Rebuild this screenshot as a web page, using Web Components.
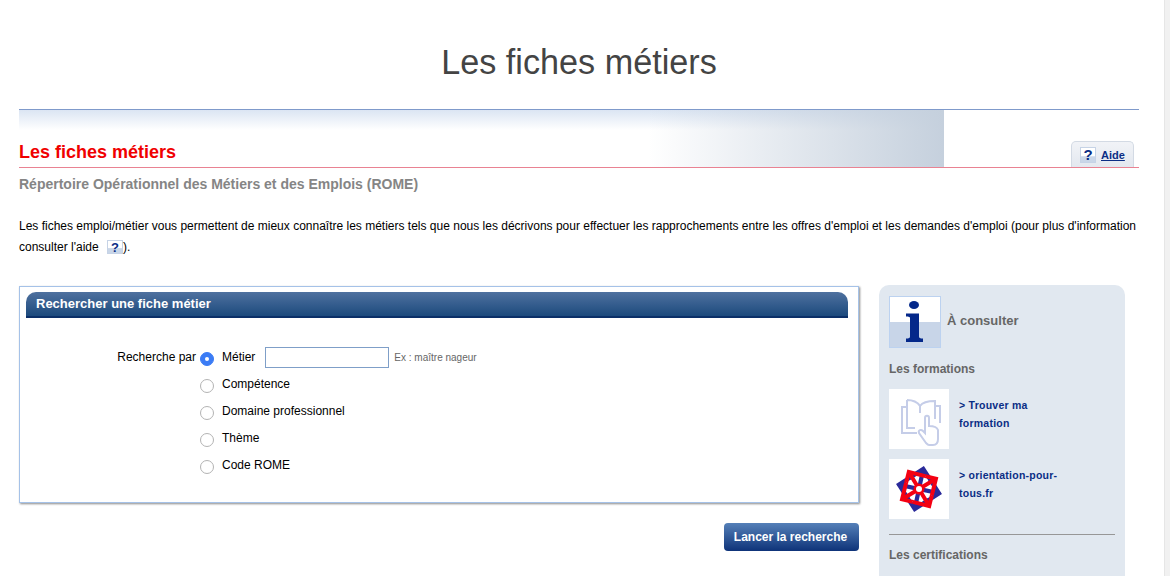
<!DOCTYPE html>
<html lang="fr"><head><meta charset="utf-8"><title>Les fiches métiers</title>
<style>
html,body{margin:0;padding:0;height:576px;overflow:hidden;background:#fff;font-family:"Liberation Sans",Arial,sans-serif;color:#000}
</style></head><body>
<fiche-page>
  <site-title>Les fiches métiers</site-title>
  <page-banner>Les fiches métiers</page-banner>
  <rome-subtitle>Répertoire Opérationnel des Métiers et des Emplois (ROME)</rome-subtitle>
  <intro-text></intro-text>
  <search-layout>
    <div>
      <search-panel></search-panel>
      <search-button></search-button>
    </div>
    <side-panel slot="side"></side-panel>
  </search-layout>
</fiche-page>
<script>
function def(name, html){
  customElements.define(name, class extends HTMLElement{
    constructor(){super();const r=this.attachShadow({mode:"open"});r.innerHTML=html;}
  });
}
const qmark=(w,h,fs,base)=>`<svg width="${w}" height="${h}" viewBox="0 0 ${w} ${h}" style="display:block"><rect width="${w}" height="${h}" fill="#fff"/><rect y="${h*0.58}" width="${w}" height="${h*0.42}" fill="#c9d6e8"/><rect x=".5" y=".5" width="${w-1}" height="${h-1}" fill="none" stroke="#c6d3e6"/><text x="${w/2}" y="${base}" text-anchor="middle" font-family="Liberation Sans" font-weight="700" font-size="${fs}" fill="#0a2d85">?</text></svg>`;
const four=(s)=>[0,90,180,270].map(a=>`<g transform="rotate(${a})">${s}</g>`).join("");

def("fiche-page",`<style>
:host{display:flex;height:576px;overflow:hidden}
.main{flex:1;min-width:0;padding:0 25px 0 19px;box-sizing:border-box}
.bar{width:6px;background:#f1f1f1;border-left:1px solid #e6e6e6;box-sizing:border-box}
</style><div class="main"><slot></slot></div><div class="bar"></div>`);

def("site-title",`<style>
:host{display:block;height:109px;box-sizing:border-box;padding-top:44px;text-align:center;font-size:34.2px;line-height:37px;color:#444}
</style><slot></slot>`);

def("help-tab",`<style>
:host{display:flex;align-items:flex-start;gap:5px;width:63px;height:26px;box-sizing:border-box;padding:5px 0 0 8px;background:linear-gradient(#f1f3f7,#e3e8ef);border:1px solid #d3dae4;border-bottom:0;border-radius:5px 5px 0 0}
a{font-size:11px;font-weight:700;color:#0a2d85;text-decoration:underline;line-height:13px;margin-top:2px}
</style>${qmark(16,16,15,13)}<a href="#">Aide</a>`);

def("page-banner",`<style>
:host{display:flex;justify-content:space-between;align-items:flex-end;height:59px;box-sizing:border-box;border-top:1px solid #7f9acb;border-bottom:1px solid #e98292;
background:linear-gradient(90deg,rgba(197,208,221,0) 68%,#c5d0dd 100%) 0 0/925px 100% no-repeat,linear-gradient(#dbe5f3,#fff 20px) 0 0/925px 100% no-repeat}
h1{margin:0 0 4px;font-size:18px;line-height:21px;font-weight:700;color:#f00000}
help-tab{margin-right:5px}
</style><h1><slot></slot></h1><help-tab></help-tab>`);

def("rome-subtitle",`<style>
:host{display:block;margin-top:8px;font-size:14px;line-height:17px;font-weight:700;color:#858585}
</style><slot></slot>`);

def("intro-text",`<style>
:host{display:block;margin-top:23px;font-size:12px;line-height:21px;width:1120px}
.q{display:inline-block;vertical-align:-3px;margin:0 0 0 5px;height:14px}
</style>Les fiches emploi/métier vous permettent de mieux connaître les métiers tels que nous les décrivons pour effectuer les rapprochements entre les offres d'emploi et les demandes d'emploi (pour plus d'information consulter l'aide <span class="q">${qmark(16,14,13,12)}</span>).`);

def("search-layout",`<style>
:host{display:flex;align-items:flex-start;gap:20px;margin-top:28px}
.l{width:840px;flex:none}
</style><div class="l"><slot></slot></div><slot name="side"></slot>`);

def("radio-row",`<style>
:host{display:flex;align-items:center;height:27px;font-size:12px}
i{width:12px;height:12px;flex:none;border:1px solid #b3b3b3;border-radius:50%;background:#fff;margin:2px 8px 0 0;display:grid;place-items:center}
:host([on]) i{background:#3b7cf5;border-color:#3b7cf5}
:host([on]) i::after{content:"";width:4px;height:4px;border-radius:50%;background:#fff}
span{position:relative;top:-1px}
</style><i></i><span><slot></slot></span><slot name="extra"></slot>`);

def("search-panel",`<style>
:host{display:block;width:840px;height:217px;box-sizing:border-box;border:1px solid #a5c2e8;padding:5px 10px 0 6px;box-shadow:1px 1px 2px #8a8a8a;background:#fff}
h2{margin:0;height:26px;box-sizing:border-box;padding-left:10px;border-radius:10px 10px 0 0;font-size:13px;line-height:23px;font-weight:700;color:#fff;background:linear-gradient(#4f719f,#1c4a7d);border-bottom:2px solid #0b2f68}
form{display:flex;margin-top:26px}
label{width:174px;text-align:right;padding-right:4px;box-sizing:border-box;font-size:12px;line-height:26px}
.extra{display:flex;align-items:center}
input{width:124px;height:21px;box-sizing:border-box;border:1px solid #7f9fc8;margin:0 5px 0 10px;padding:0;background:#fff;display:block}
small{font-size:10px;color:#666}
</style><h2>Rechercher une fiche métier</h2>
<form><label>Recherche par</label><div>
<radio-row on>Métier<span slot="extra" class="extra"><input type="text" aria-label="Métier"><small>Ex : maître nageur</small></span></radio-row>
<radio-row>Compétence</radio-row><radio-row>Domaine professionnel</radio-row><radio-row>Thème</radio-row><radio-row>Code ROME</radio-row>
</div></form>`);

def("promo-link",`<style>
:host{display:flex;gap:10px;height:60px;margin-bottom:10px}
.p{width:60px;height:60px;background:#fff;flex:none}
a{font-size:10.5px;line-height:18px;font-weight:700;color:#0a2d85;text-decoration:none;width:105px;margin-top:7px;letter-spacing:.25px}
</style><div class="p"><slot name="pic"></slot></div><a href="#"><slot></slot></a>`);

def("side-panel",`<style>
:host{display:block;width:246px;height:300px;box-sizing:border-box;margin-top:-1px;padding:11px 10px;background:#e1e8f0;border-radius:10px 10px 0 0;color:#666;font-weight:700}
.head{display:flex;align-items:center;gap:6px;font-size:13px}
.head span{margin-top:-4px}
h3{margin:0;font:inherit;font-size:12px;line-height:14px}
.f{margin:14px 0 13px}
hr{border:0;border-top:1px solid #979797;margin:15px 0 13px}
svg{display:block}
</style>
<div class="head"><svg width="52" height="52" viewBox="0 0 52 52"><rect width="52" height="52" fill="#fff"/><rect y="26" width="52" height="26" fill="#c8d5e8"/><rect x=".5" y=".5" width="51" height="51" fill="none" stroke="#bcd2f0"/><ellipse cx="25" cy="9" rx="5" ry="4" fill="#04288a"/><path d="M17 17.5H30V40.5C30 42 31 42.5 34 42.5V46H17V42.5C20 42.5 21 42 21 40.5V22C21 21 20 20.5 17 20.5Z" fill="#04288a"/></svg><span>À consulter</span></div>
<h3 class="f">Les formations</h3>
<promo-link><svg slot="pic" width="60" height="60" viewBox="0 0 60 60" fill="none" stroke="#c5cde8" stroke-width="2"><path d="M18 18H13V44H28M18 11V39H26M18 11C24 11 29 14 31 17C33 14 39 12 46 12V30M31 17V24M46 17H51V34"/><path d="M37 54L30 44C29 41 32 40 34 42L36 44V29C36 26 40 26 40 29V37C44 37 48 38 49 41V50C49 54 47 56 44 56H40C39 56 38 55 37 54Z" fill="#fff"/></svg>&gt; Trouver ma formation</promo-link>
<promo-link><svg slot="pic" width="60" height="60" viewBox="0 0 60 60"><g transform="translate(30 30)">
<g transform="rotate(57)" fill="none" stroke="#2a2a9a" stroke-width="4.2" stroke-linecap="round">${four('<path d="M-14.5 1V-14.5H1M-14.5 -14.5L2 2"/>')}</g>
<g transform="rotate(14)" fill="none" stroke="#f40012" stroke-width="4">${four('<path d="M-14 -3V-14H3M-14 -14L-1 -1"/>')}</g>
<circle r="5.5" fill="#f40012"/><circle r="3" fill="#fff"/></g></svg>&gt; orientation-pour-tous.fr</promo-link>
<hr>
<h3>Les certifications</h3>`);

def("search-button",`<style>
:host{display:flex;justify-content:flex-end;margin-top:20px}
button{width:135px;height:28px;border:0;border-radius:4px;padding:0 2px 0 0;background:linear-gradient(#5580b8,#0e3379);color:#fff;font:700 12px "Liberation Sans",Arial,sans-serif}
</style><button type="button">Lancer la recherche</button>`);
</script>
</body></html>
